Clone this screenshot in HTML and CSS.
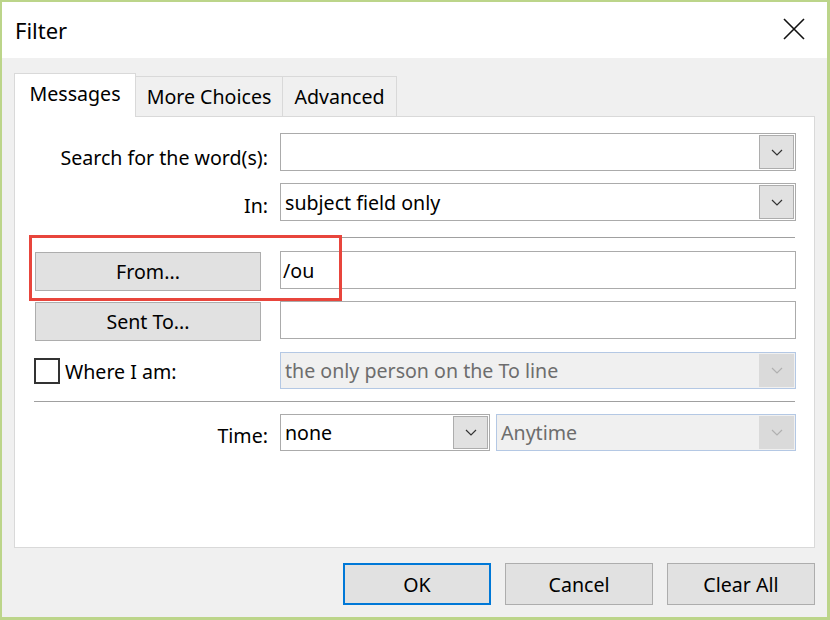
FILE: index.html
```html
<!DOCTYPE html>
<html>
<head>
<meta charset="utf-8">
<link rel="stylesheet" href="styles.css">
</head>
<body>
<div class="window">
  <div class="titlebar">
    <span class="title">Filter</span>
    <svg class="close" width="22" height="22" viewBox="0 0 22 22"><path d="M1 1 L21 21 M21 1 L1 21" stroke="#111" stroke-width="1.6" fill="none"/></svg>
  </div>
  <div class="client">
    <div class="tabs">
      <div class="tab tab-messages active">Messages</div>
      <div class="tab tab-more">More Choices</div>
      <div class="tab tab-adv">Advanced</div>
    </div>
    <div class="panel">
      <div class="row row-search">
        <label class="lbl lbl-search">Search for the word(s):</label>
        <div class="combo">
          <span class="combo-text"></span>
          <span class="drop"><svg width="12" height="7" viewBox="0 0 12 7"><path d="M1 1 L6 6 L11 1" stroke="#333" stroke-width="1.2" fill="none"/></svg></span>
        </div>
      </div>
      <div class="row row-in">
        <label class="lbl">In:</label>
        <div class="combo">
          <span class="combo-text">subject field only</span>
          <span class="drop"><svg width="12" height="7" viewBox="0 0 12 7"><path d="M1 1 L6 6 L11 1" stroke="#333" stroke-width="1.2" fill="none"/></svg></span>
        </div>
      </div>
      <div class="sep sep-1"></div>
      <div class="row row-from">
        <div class="btn-cell"><button class="btn side-btn">From...</button></div>
        <div class="textbox">/ou</div>
        <div class="highlight"></div>
      </div>
      <div class="row row-sent">
        <div class="btn-cell"><button class="btn side-btn">Sent To...</button></div>
        <div class="textbox"></div>
      </div>
      <div class="row row-where">
        <div class="check-cell"><span class="checkbox"></span><span class="check-label">Where I am:</span></div>
        <div class="combo disabled">
          <span class="combo-text">the only person on the To line</span>
          <span class="drop"><svg width="12" height="7" viewBox="0 0 12 7"><path d="M1 1 L6 6 L11 1" stroke="#b0b0b0" stroke-width="1.2" fill="none"/></svg></span>
        </div>
      </div>
      <div class="sep sep-2"></div>
      <div class="row row-time">
        <label class="lbl lbl-time">Time:</label>
        <div class="time-fields">
          <div class="combo combo-none">
            <span class="combo-text">none</span>
            <span class="drop"><svg width="12" height="7" viewBox="0 0 12 7"><path d="M1 1 L6 6 L11 1" stroke="#333" stroke-width="1.2" fill="none"/></svg></span>
          </div>
          <div class="combo disabled combo-any">
            <span class="combo-text">Anytime</span>
            <span class="drop"><svg width="12" height="7" viewBox="0 0 12 7"><path d="M1 1 L6 6 L11 1" stroke="#b0b0b0" stroke-width="1.2" fill="none"/></svg></span>
          </div>
        </div>
      </div>
    </div>
    <div class="footer">
      <button class="btn foot-btn default">OK</button>
      <button class="btn foot-btn">Cancel</button>
      <button class="btn foot-btn">Clear All</button>
    </div>
  </div>
</div>
</body>
</html>
```

FILE: styles.css
```css
* { box-sizing: border-box; }
html, body { margin: 0; padding: 0; }
body {
  width: 830px;
  height: 620px;
  font-family: "Noto Sans", "Open Sans", "DejaVu Sans", sans-serif;
  font-size: 19.6px;
  color: #000;
  background: #bcd58a;
}
.window {
  width: 830px;
  height: 620px;
  border-style: solid;
  border-color: #bcd58a;
  border-width: 2px 3px 3px 2px;
  display: flex;
  flex-direction: column;
  background: #f0f0f0;
}
.titlebar {
  height: 56px;
  background: #fff;
  display: flex;
  align-items: center;
  justify-content: space-between;
  padding: 0 22px 0 13px;
  flex: none;
}
.title { font-size: 22px; margin-top: -1px; }
.close { display: block; margin-top: -2px; }
.client {
  flex: 1;
  padding: 14px 12px 0 12px;
  display: flex;
  flex-direction: column;
}
.tabs {
  display: flex;
  align-items: flex-end;
  height: 44px;
  position: relative;
  z-index: 2;
}
.tab {
  height: 40px;
  border: 1px solid #d9d9d9;
  border-bottom: none;
  border-left: none;
  background: #f0f0f0;
  display: flex;
  align-items: center;
  justify-content: center;
  padding-bottom: 1px;
}
.tab.active {
  height: 44px;
  border-left: 1px solid #d9d9d9;
  background: #fff;
  padding-bottom: 5px;
  margin-bottom: -1px;
}
.tab-messages { width: 122px; }
.tab-more { width: 147px; }
.tab-adv { width: 114px; }
.panel {
  height: 432px;
  background: #fff;
  border: 1px solid #d9d9d9;
  padding: 16px 16px 0 20px;
  display: flex;
  flex-direction: column;
}
.row {
  display: grid;
  grid-template-columns: 233px 516px;
  column-gap: 12px;
  height: 38px;
  align-items: center;
  position: relative;
}
.row-in { margin-top: 12px; }
.row-from { margin-top: 13px; }
.row-sent { margin-top: 12px; }
.row-where { margin-top: 13px; height: 37px; }
.row-time { margin-top: 12px; height: 37px; }
.lbl {
  text-align: right;
  white-space: nowrap;
  padding-top: 7px;
}
.lbl-search { padding-top: 10px; }
.lbl-time { padding-top: 5px; }
.sep {
  height: 1px;
  background: #a0a0a0;
  margin-right: 3px;
  margin-left: -1px;
}
.sep-1 { margin-top: 16px; }
.sep-2 { margin-top: 12px; }
.combo {
  height: 38px;
  border: 1px solid #ababab;
  background: #fff;
  display: flex;
  align-items: center;
  justify-content: space-between;
  padding: 1px;
}
.row-where .combo, .row-time .combo { height: 37px; }
.combo-text {
  padding-left: 3px;
  white-space: nowrap;
}
.drop {
  width: 35px;
  height: 100%;
  background: #e1e1e1;
  border: 1px solid #adadad;
  display: flex;
  align-items: center;
  justify-content: center;
  flex: none;
}
.drop svg { display: block; }
.combo.disabled {
  background: #f0f0f0;
  border-color: #b4c8e4;
  color: #6d6d6d;
}
.combo.disabled .drop {
  background: #dadada;
  border-color: #dadada;
}
.time-fields {
  display: flex;
  gap: 6px;
}
.combo-none { width: 210px; }
.combo-any { flex: 1; }
.textbox {
  height: 38px;
  border: 1px solid #ababab;
  background: #fff;
  display: flex;
  align-items: center;
  padding-left: 2px;
  align-self: start;
}
.btn-cell {
  align-self: start;
  padding-top: 1px;
}
.btn {
  font-family: inherit;
  font-size: 19.6px;
  color: #000;
  background: #e1e1e1;
  border: 1px solid #adadad;
  margin: 0;
  padding: 0;
}
.side-btn {
  width: 226px;
  height: 39px;
  display: block;
}
.highlight {
  position: absolute;
  left: -6px;
  top: -16px;
  width: 313px;
  height: 66px;
  border: 3px solid #e8453c;
  pointer-events: none;
}
.check-cell {
  display: flex;
  align-items: center;
  margin-left: -1px;
}
.checkbox {
  width: 26px;
  height: 26px;
  border: 2px solid #333;
  background: #fff;
  flex: none;
}
.check-label { margin-left: 5px; white-space: nowrap; padding-top: 2px; }
.footer {
  display: flex;
  justify-content: flex-end;
  gap: 14px;
  margin-top: 15px;
  padding-right: 0;
}
.foot-btn {
  width: 148px;
  height: 42px;
}
.foot-btn.default {
  border: 2px solid #0078d7;
}
```
